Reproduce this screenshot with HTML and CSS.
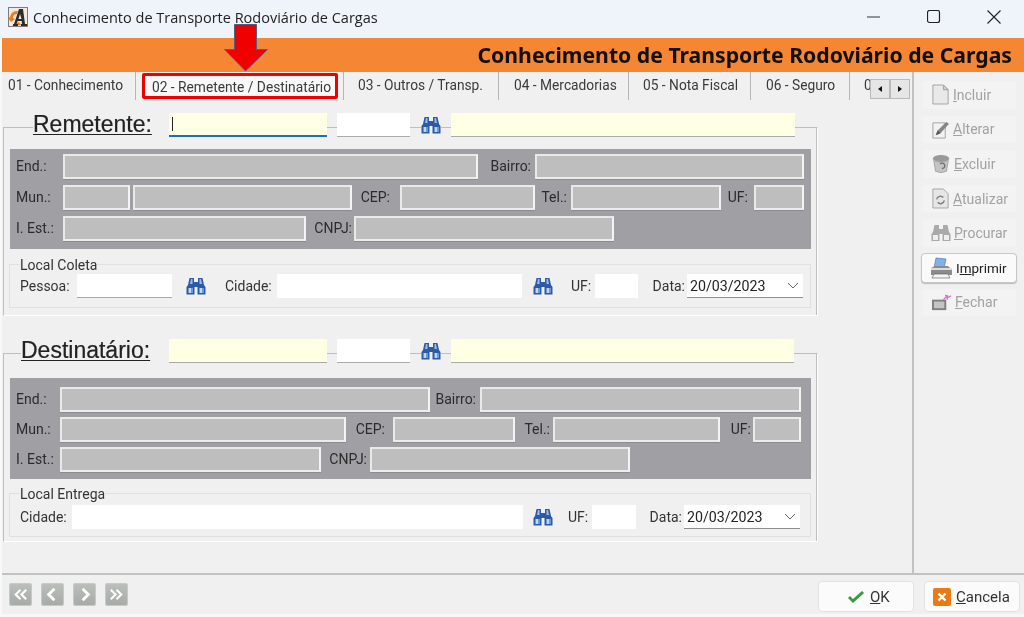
FILE: index.html
```html
<!DOCTYPE html>
<html lang="pt">
<head>
<meta charset="utf-8">
<title>Conhecimento de Transporte Rodoviário de Cargas</title>
<link rel="stylesheet" href="styles.css">
</head>
<body>
<svg class="sprites" width="0" height="0">
  <symbol id="bin" viewBox="0 0 20 18">
    <path d="M3.500 1h4.500v4h4V1h4.500L18 8l1.500 2v7.500H11.500V10h-3v7.500H.5V10L2 8z" fill="#2b5ba6"/>
    <path d="M5 2h1.500v5H4zM13.500 2H15l1 5h-2.500z" fill="#9dbbe4"/>
    <path d="M2 11h5v5H2zM13 11h5v5h-5z" fill="#6f97d2"/>
    <path d="M3 11h2v5H3zM14 11h2v5h-2z" fill="#c3d6f0"/>
  </symbol>
</svg>
<div class="window">
  <header class="titlebar">
    <svg class="app-icon" viewBox="0 0 20 20" width="20" height="20">
      <rect x="0" y="0" width="20" height="20" fill="#7d7d7d"/>
      <rect x="1" y="1" width="18" height="18" fill="#efeae4"/>
      <path d="M2 10a7 7 0 0 1 8-6l-1 3a4 4 0 0 0-4 4l2 1-4 3-3-4zM7 17l4-2 2 3H8z" fill="#ec7d1f"/>
      <path d="M11 2h4l2 15h2v2h-6v-2h1l-.3-3h-4l-1.200 3H10v2H5v-2h1zM12 7l-1.500 5h3z" fill="#2e2b28"/>
    </svg>
    <span class="title">Conhecimento de Transporte Rodoviário de Cargas</span>
    <div class="winctl">
      <svg width="14" height="14" viewBox="0 0 14 14"><path d="M0 7h13" stroke="#333" fill="none"/></svg>
      <svg width="14" height="14" viewBox="0 0 14 14"><rect x=".5" y=".5" width="12" height="12" rx="2" stroke="#222" stroke-width="1.2" fill="none"/></svg>
      <svg width="14" height="14" viewBox="0 0 14 14"><path d="M.5.5l13 13M13.500.5l-13 13" stroke="#222" stroke-width="1.1" fill="none"/></svg>
    </div>
  </header>

  <div class="banner">Conhecimento de Transporte Rodoviário de Cargas</div>

  <div class="middle">
    <main class="content">
      <nav class="tabs">
        <span class="tab t1">01 - Conhecimento</span>
        <span class="tab t2">02 - Remetente / Destinatário</span>
        <span class="tab t3">03 - Outros / Transp.</span>
        <span class="tab t4">04 - Mercadorias</span>
        <span class="tab t5">05 - Nota Fiscal</span>
        <span class="tab t6">06 - Seguro</span>
        <span class="tab t7">07</span>
        <div class="scroller">
          <span class="arrow"><i class="tri-l"></i></span>
          <span class="arrow"><i class="tri-r"></i></span>
        </div>
      </nav>

      <section class="party rem">
        <div class="party-head">
          <h2 class="party-title">Remetente:</h2>
          <span class="fld req first focus"><i class="caret"></i></span>
          <span class="fld code"></span>
          <svg class="binicon"><use href="#bin"/></svg>
          <span class="fld req name"></span>
        </div>
        <div class="info">
          <div class="line l1">
            <label>End.:</label><span class="ro"></span>
            <label class="bairro">Bairro:</label><span class="ro"></span>
          </div>
          <div class="line l2">
            <label>Mun.:</label><span class="ro"></span><span class="ro"></span>
            <label class="cep">CEP:</label><span class="ro"></span>
            <label class="tel">Tel.:</label><span class="ro"></span>
            <label class="uf">UF:</label><span class="ro"></span>
          </div>
          <div class="line l3">
            <label>I. Est.:</label><span class="ro"></span>
            <label class="cnpj">CNPJ:</label><span class="ro"></span>
          </div>
        </div>
        <div class="local">
          <span class="local-title">Local Coleta</span>
          <div class="local-row">
            <label>Pessoa:</label><span class="wf sunk"></span>
            <svg class="binicon"><use href="#bin"/></svg>
            <label>Cidade:</label><span class="wf"></span>
            <svg class="binicon"><use href="#bin"/></svg>
            <label>UF:</label><span class="wf"></span>
            <label class="data">Data:</label>
            <span class="combo">20/03/2023<svg width="12" height="7" viewBox="0 0 12 7"><path d="M1 1l5 5 5-5" stroke="#666" fill="none"/></svg></span>
          </div>
        </div>
      </section>

      <section class="party dest">
        <div class="party-head">
          <h2 class="party-title">Destinatário:</h2>
          <span class="fld req first"></span>
          <span class="fld code"></span>
          <svg class="binicon"><use href="#bin"/></svg>
          <span class="fld req name"></span>
        </div>
        <div class="info">
          <div class="line l1">
            <label>End.:</label><span class="ro"></span>
            <label class="bairro">Bairro:</label><span class="ro"></span>
          </div>
          <div class="line l2">
            <label>Mun.:</label><span class="ro"></span>
            <label class="cep">CEP:</label><span class="ro"></span>
            <label class="tel">Tel.:</label><span class="ro"></span>
            <label class="uf">UF:</label><span class="ro"></span>
          </div>
          <div class="line l3">
            <label>I. Est.:</label><span class="ro"></span>
            <label class="cnpj">CNPJ:</label><span class="ro"></span>
          </div>
        </div>
        <div class="local">
          <span class="local-title">Local Entrega</span>
          <div class="local-row">
            <label>Cidade:</label><span class="wf"></span>
            <svg class="binicon"><use href="#bin"/></svg>
            <label>UF:</label><span class="wf"></span>
            <label class="data">Data:</label>
            <span class="combo">20/03/2023<svg width="12" height="7" viewBox="0 0 12 7"><path d="M1 1l5 5 5-5" stroke="#666" fill="none"/></svg></span>
          </div>
        </div>
      </section>
    </main>

    <aside class="side">
      <button class="sbtn off">
        <svg viewBox="0 0 20 22" width="19" height="21"><path d="M2 1h11l5 5v15H2z" fill="#e9e9e9" stroke="#a2a2a2"/><path d="M13 1v5h5z" fill="#cfcfcf" stroke="#a2a2a2"/></svg>
        <span><u>I</u>ncluir</span>
      </button>
      <button class="sbtn off">
        <svg viewBox="0 0 20 22" width="19" height="21"><path d="M2 4h13v16H2z" fill="#f2f2f2" stroke="#a2a2a2"/><path d="M5 17l2-5L16 3l3 2-9 10z" fill="#858585"/><path d="M5 17l2-5 3 3z" fill="#555"/></svg>
        <span><u>A</u>lterar</span>
      </button>
      <button class="sbtn off">
        <svg viewBox="0 0 22 22" width="20" height="20"><ellipse cx="11" cy="5" rx="9" ry="4" fill="#9a9a9a"/><path d="M3 7l2 12q6 3 12 0l2-12q-8 4-16 0z" fill="#c4c4c4" stroke="#a3a3a3"/><path d="M10 11a3 3 0 1 1 2 5" stroke="#707070" stroke-width="1.5" fill="none"/></svg>
        <span><u>E</u>xcluir</span>
      </button>
      <button class="sbtn off">
        <svg viewBox="0 0 20 22" width="19" height="21"><path d="M2 1h11l5 5v15H2z" fill="#e6e6e6" stroke="#a2a2a2"/><path d="M6 12a4 4 0 0 1 7-2M14 13a4 4 0 0 1-7 2" stroke="#808080" stroke-width="1.500" fill="none"/></svg>
        <span><u>A</u>tualizar</span>
      </button>
      <button class="sbtn off">
        <svg viewBox="0 0 20 20" width="20" height="20"><path d="M3.500 2h4.500v4h4V2h4.500L18 9l1.500 2v7H11.500v-7h-3v7H.5v-7L2 9z" fill="#aaa"/><path d="M2 12h5v5H2zM13 12h5v5h-5z" fill="#efefef"/></svg>
        <span><u>P</u>rocurar</span>
      </button>
      <button class="sbtn on">
        <svg viewBox="0 0 24 22" width="24" height="22"><path d="M7 1l10 1-2 9H5z" fill="#7fb2ea" stroke="#4b7bb5" stroke-width=".7"/><path d="M2 11l4-2h13l4 4v5H2z" fill="#8c8c8c"/><path d="M2 11h21v2H2z" fill="#dcdcdc"/><path d="M5 17h14l2 4H3z" fill="#f4f4f4" stroke="#555" stroke-width=".6"/></svg>
        <span class="strong">I<u>m</u>primir</span>
      </button>
      <button class="sbtn off">
        <svg viewBox="0 0 22 20" width="21" height="19"><path d="M1 7h15v11H1z" fill="#7f7f7f"/><path d="M3 9h11v7H3z" fill="#c4c4c4"/><path d="M13 7l4-4M17 7V2M17 5l4-2M15 2l3 3" stroke="#d868d8" stroke-width="1.400" fill="none"/></svg>
        <span><u>F</u>echar</span>
      </button>
    </aside>
  </div>

  <footer class="bottom">
    <div class="nav">
      <span class="navbtn"><svg viewBox="0 0 24 24" width="23" height="23"><path d="M12 7l-5 5 5 5M18 7l-5 5 5 5" stroke="#fff" stroke-width="2.2" fill="none"/></svg></span>
      <span class="navbtn"><svg viewBox="0 0 24 24" width="23" height="23"><path d="M14 6l-6 6 6 6" stroke="#fff" stroke-width="3" fill="none"/></svg></span>
      <span class="navbtn"><svg viewBox="0 0 24 24" width="23" height="23"><path d="M10 6l6 6-6 6" stroke="#fff" stroke-width="3" fill="none"/></svg></span>
      <span class="navbtn"><svg viewBox="0 0 24 24" width="23" height="23"><path d="M6 7l5 5-5 5M12 7l5 5-5 5" stroke="#fff" stroke-width="2.2" fill="none"/></svg></span>
    </div>
    <div class="actions">
      <button class="act ok">
        <svg viewBox="0 0 18 14" width="18" height="14"><path d="M1 8l2-2 3 3 9-8 2 2L6 13z" fill="#3a9a3c"/></svg>
        <span><u>O</u>K</span>
      </button>
      <button class="act cancel">
        <svg viewBox="0 0 18 18" width="18" height="18"><rect width="18" height="18" rx="2" fill="#ec7a14"/><path d="M5.500 5.500l7 7M12.500 5.500l-7 7" stroke="#fff" stroke-width="2.4"/></svg>
        <span><u>C</u>ancela</span>
      </button>
    </div>
  </footer>

  <svg class="callout" viewBox="0 0 46 48" width="46" height="48">
    <path d="M11.500.5h22v25h11L22.500 47 1.500 25.500h10z" fill="#f00000" stroke="#4f6080"/>
  </svg>
</div>
</body>
</html>
```

FILE: styles.css
```css
*, *::before, *::after { box-sizing: border-box; }
html, body { margin: 0; padding: 0; }
body { width: 1024px; height: 617px; overflow: hidden; background: #fff; font-family: Roboto, "Liberation Sans", Arial, sans-serif; }
.sprites { position: absolute; }

.window { position: relative; width: 1024px; height: 617px; padding: 0 0 3px 2px; background: #f8f8f8; display: flex; flex-direction: column; filter: blur(.35px); color: #333; }

.titlebar { height: 38px; margin-left: -2px; padding: 0 23px 4px 8px; display: flex; align-items: center; background: #eff3fa; flex: none; }
.app-icon { margin-right: 5px; }
.title { font: 14.5px "Open Sans", sans-serif; color: #222; }
.winctl { margin-left: auto; display: flex; gap: 46px; align-items: center; }

.banner { height: 34px; flex: none; background: #f58634; text-align: right; padding-right: 12px; font: bold 21.2px/34px "Noto Sans", sans-serif; color: #111; }

.middle { flex: 1; display: flex; min-height: 0; background: #f0f0f0; }
.content { width: 912px; border-right: 2px solid #c2c2c2; flex: none; }

.tabs { position: relative; height: 28px; display: flex; font-size: 13.75px; color: #3a3a3a; }
.tab { border-right: 1px solid #b5b5b5; line-height: 26px; height: 28px; white-space: nowrap; }
.t1 { width: 134px; padding-left: 6px; }
.t2 { width: 208px; padding: 2px 0 0 16px; position: relative; z-index: 0; }
.t2::before { content: ""; position: absolute; left: 6px; top: 1px; width: 196px; height: 26px; border: 3px solid #f00000; border-radius: 2px; background: #f8f8f8; z-index: -1; }
.t3 { width: 155px; padding-left: 14px; }
.t4 { width: 130px; padding-left: 15px; }
.t5 { width: 122px; padding-left: 14px; }
.t6 { width: 99px; padding-left: 15px; }
.t7 { width: 21px; padding-left: 14px; border-right: 0; }
.scroller { position: absolute; left: 868px; top: 7px; width: 40px; height: 20px; display: flex; }
.arrow { flex: 1; background: #e6e6e6; border: 1px solid #b9b9b9; display: flex; align-items: center; justify-content: center; }
.tri-l { border: 3px solid transparent; border-right: 4px solid #111; border-left: 0; }
.tri-r { border: 3px solid transparent; border-left: 4px solid #111; border-right: 0; }

.party { position: relative; margin-left: 1px; width: 815px; height: 189px; border: 1px solid #bfbfbf; border-right-color: #fff; border-bottom-color: #fff; box-shadow: inset -1px 0 #bfbfbf; }
.rem { margin-top: 27px; }
.dest { margin-top: 37px; }

.party-head { position: absolute; top: -15px; left: 0; height: 24px; display: flex; align-items: center; width: 100%; }
.party-title { margin: -2px 0 0; font: 400 23px/26px "Liberation Sans", sans-serif; color: #222; text-decoration: underline; text-decoration-thickness: 1px; text-underline-offset: 2px; background: #f0f0f0; white-space: nowrap; -webkit-text-stroke: .2px #222; }
.rem .party-title { margin-left: 29px; width: 136px; }
.dest .party-title { margin-left: 17px; width: 148px; }
.fld { height: 24px; background: #fff; border-bottom: 1px solid #aaa; display: block; flex: none; position: relative; }
.req { background: #ffffe3; }
.first { width: 158px; }
.focus { border-bottom: 2px solid #1f6fc0; }
.caret { position: absolute; left: 3px; top: 4px; width: 1px; height: 14px; background: #222; }
.code { margin-left: 10px; width: 73px; }
.party-head .binicon { margin: 0 10px 0 11px; background: #f0f0f0; }
.name { width: 344px; }
.dest .name { width: 343px; }
.binicon { width: 20px; height: 18px; flex: none; }

.info { position: absolute; left: 6px; width: 801px; height: 100px; background: #a0a0a4; font-size: 14px; color: #2b2b2b; display: flex; flex-direction: column; }
.rem .info { top: 21px; padding: 5px 6px 0; gap: 6px; }
.dest .info { top: 24px; height: 101px; padding: 9px 6px 0; gap: 5px; }
.line { display: grid; height: 25px; align-items: center; }
.line label { line-height: 25px; white-space: nowrap; }
.line label:not(:first-child) { justify-self: end; }
.ro { height: 25px; background: #bebebe; border: 2px solid #e9e9e9; border-right-color: #f4f4f4; border-bottom-color: #ececec; box-shadow: 0 1px #8c8c90; }

.rem .l1 { grid-template-columns: 47px 415px 57px 269px; }
.rem .l2 { grid-template-columns: 47px 67px 222px 48px 135px 36px 150px 33px 50px; }
.rem .l2 .ro:nth-of-type(2) { margin-left: 3px; }
.rem .l3 { grid-template-columns: 47px 243px 48px 260px; }
.rem .bairro { padding-right: 4px; }
.rem .cep { padding-right: 10px; }
.rem .tel { padding-right: 4px; }
.rem .uf { padding-right: 6px; }
.rem .cnpj { padding-right: 2px; }

.dest .l1 { grid-template-columns: 44px 370px 50px 321px; }
.dest .l2 { grid-template-columns: 44px 286px 47px 122px 38px 167px 33px 48px; }
.dest .l3 { grid-template-columns: 44px 261px 49px 260px; }
.dest .bairro { padding-right: 4px; }
.dest .cep { padding-right: 8px; }
.dest .tel { padding-right: 3px; }
.dest .uf { padding-right: 2px; }
.dest .cnpj { padding-right: 3px; }

.local { position: absolute; left: 5px; width: 802px; height: 44px; border: 1px solid #e0e0e0; font-size: 14px; color: #333; }
.rem .local { top: 136px; }
.dest .local { top: 139px; }
.local-title { position: absolute; left: 10px; top: -8px; background: #f0f0f0; line-height: 16px; font-size: 14px; }
.local-row { display: grid; height: 24px; padding-left: 10px; align-items: center; }
.rem .local-row { margin-top: 9px; grid-template-columns: 57px 95px 53px 52px 245px 49px 24px 43px 49px 116px; }
.dest .local-row { margin-top: 11px; grid-template-columns: 52px 451px 45px 24px 44px 48px 116px; }
.local-row label { white-space: nowrap; }
.local-row .data { justify-self: end; padding-right: 2px; }
.local-row .binicon { margin-left: 10px; }
.rem .local-row .binicon:first-of-type { margin-left: 14px; }
.rem .local-row .binicon:last-of-type { margin-left: 11px; }
.wf { height: 24px; background: #fff; }
.sunk { border-bottom: 1px solid #aaa; }
.combo { height: 24px; background: #fff; border-bottom: 1px solid #8e8e8e; padding: 0 4px 0 3px; font-size: 14.2px; color: #222; display: flex; align-items: center; justify-content: space-between; }

.side { flex: 1; padding: 8px 6px 0 7px; display: flex; flex-direction: column; gap: 5px; }
.sbtn { height: 29.6px; flex: none; border: 1px solid #f0f0f0; border-radius: 4px; background: #f3f3f3; font: 14px Roboto, sans-serif; color: #a2a2a2; display: flex; align-items: center; padding: 0 0 0 9px; gap: 3px; width: 96px; }
.sbtn.on { background: #fafafa; border-color: #c8c8c8; color: #222; box-shadow: 0 1px 1px #bbb; padding-left: 7px; }
.strong { font-size: 13.5px; }

.bottom { height: 41px; border-top: 2px solid #c2c2c2; flex: none; display: flex; align-items: center; justify-content: space-between; padding: 0 4px 0 7px; background: #f0f0f0; }
.nav { display: flex; gap: 9px; }
.navbtn { width: 23px; height: 23px; border-radius: 3px; background: linear-gradient(#bcc0bc, #a6aaa6); display: block; box-shadow: inset 0 0 0 1px #c6cac6; }
.navbtn svg { display: block; }
.actions { display: flex; gap: 10px; margin-top: 4px; }
.act { height: 31px; width: 96px; border: 1px solid #e2e2e2; border-radius: 4px; background: #fbfbfb; display: flex; align-items: center; gap: 5px; font: 15px Roboto, sans-serif; color: #333; padding: 0; }
.ok { padding-left: 28px; }
.cancel { padding-left: 8px; }

.callout { position: absolute; left: 223px; top: 24px; }
```
